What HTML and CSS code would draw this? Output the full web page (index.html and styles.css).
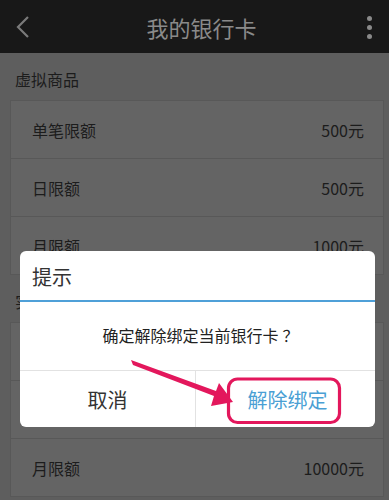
FILE: index.html
```html
<!DOCTYPE html>
<html lang="zh">
<head>
<meta charset="utf-8">
<link rel="stylesheet" href="styles.css">
</head>
<body>
<div class="screen">
  <header class="topbar">
    <svg class="back" width="20" height="26" viewBox="0 0 20 26"><polyline points="14,3 4,13 14,23" fill="none" stroke="#7a7a7a" stroke-width="2.2"/></svg>
    <div class="title">我的银行卡</div>
    <div class="more"><span></span><span></span><span></span></div>
  </header>

  <div class="section-label">虚拟商品</div>
  <div class="card">
    <div class="row"><span>单笔限额</span><span>500元</span></div>
    <div class="row"><span>日限额</span><span>500元</span></div>
    <div class="row"><span>月限额</span><span>1000元</span></div>
  </div>

  <div class="section-label">实物商品</div>
  <div class="card">
    <div class="row"><span>单笔限额</span><span>5000元</span></div>
    <div class="row"><span>日限额</span><span>5000元</span></div>
    <div class="row"><span>月限额</span><span>10000元</span></div>
  </div>

  <div class="dialog">
    <div class="dialog-title">提示</div>
    <div class="dialog-msg">确定解除绑定当前银行卡<span class="qm">？</span></div>
    <div class="dialog-btns">
      <div class="btn">取消</div>
      <div class="btn primary">解除绑定</div>
    </div>
  </div>

  <svg class="annot" width="389" height="500" viewBox="0 0 389 500">
    <rect x="228.5" y="379" width="111" height="43.5" rx="9" ry="9" fill="none" stroke="#e3175c" stroke-width="3.2"/>
    <polygon points="131,360 133,365 214,396 211,406 233,402 219,383 216,391" fill="#e3175c"/>
  </svg>
</div>
</body>
</html>
```
FILE: styles.css
```css
* { box-sizing: border-box; }
html, body { margin: 0; padding: 0; }
body {
  background: #5e5e5e;
  font-family: "Noto Sans CJK SC", "Noto Sans", sans-serif;
  width: 389px;
  height: 500px;
  overflow: hidden;
}
.screen { position: relative; width: 389px; height: 500px; overflow: hidden; }

.topbar {
  height: 53px;
  background: #181818;
  display: flex;
  align-items: center;
  justify-content: space-between;
  padding: 0 16px 0 14px;
}
.back { display: block; }
.title {
  color: #8a8a8a;
  font-size: 22px;
  line-height: 1;
  margin-left: 2px;
}
.more {
  display: flex;
  flex-direction: column;
  gap: 4px;
  width: 6px;
  margin-top: 1px;
}
.more span {
  width: 5px;
  height: 5px;
  border-radius: 50%;
  background: #8a8a8a;
}

.section-label {
  height: 47px;
  padding: 16px 0 0 15px;
  font-size: 16px;
  line-height: 20px;
  color: #1c1c1c;
}
.card {
  margin: 0 5px 0 10px;
  background: #646464;
  border: 1px solid #585858;
}
.row {
  height: 58px;
  display: flex;
  align-items: center;
  justify-content: space-between;
  padding: 0 19px 0 21px;
  font-size: 16px;
  color: #1c1c1c;
  border-top: 1px solid #585858;
}
.row:first-child { border-top: 0; height: 57px; }

.dialog {
  position: absolute;
  left: 20px;
  top: 251px;
  width: 355px;
  height: 176px;
  background: #ffffff;
  border-radius: 6px;
  display: flex;
  flex-direction: column;
  overflow: hidden;
}
.dialog-title {
  height: 51px;
  padding: 6px 0 0 12px;
  font-size: 20px;
  line-height: 40px;
  color: #333;
  border-bottom: 2px solid #4fa0d8;
}
.dialog-msg {
  height: 68px;
  display: flex;
  align-items: center;
  justify-content: center;
  font-size: 16px;
  color: #222;
  padding-bottom: 2px;
  padding-left: 6px;
}
.qm { margin-left: 4px; }
.dialog-btns {
  flex: 1;
  display: flex;
  border-top: 1px solid #e2e2e2;
}
.btn {
  flex: 1;
  display: flex;
  align-items: center;
  justify-content: center;
  font-size: 20px;
  color: #333;
}
.btn.primary {
  color: #4a9fd4;
  border-left: 1px solid #e2e2e2;
  padding-left: 4px;
}

.annot {
  position: absolute;
  left: 0;
  top: 0;
  pointer-events: none;
}
```
